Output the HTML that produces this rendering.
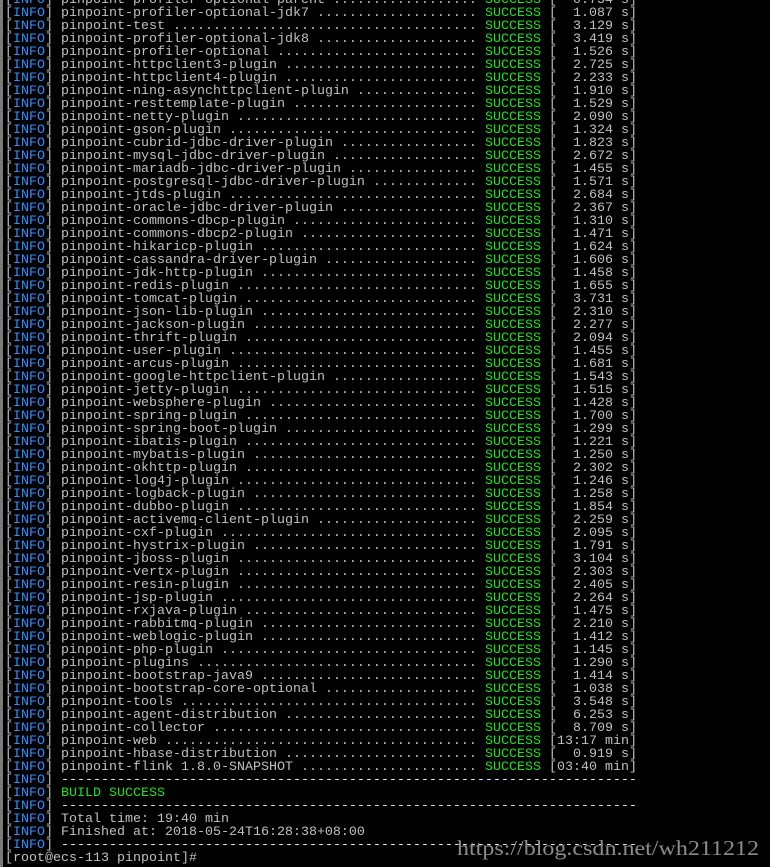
<!DOCTYPE html>
<html><head><meta charset="utf-8">
<style>
html,body{margin:0;padding:0;background:#000;}
body{width:770px;height:867px;overflow:hidden;position:relative;}
.bar{position:absolute;left:0;top:0;width:3px;height:867px;background:#7a7a7a;}
.t{position:absolute;left:5px;top:-6px;font-family:"Liberation Mono",monospace;font-size:13.33px;line-height:13px;color:#c0c0c0;}
.l{position:relative;height:13px;white-space:pre;}
.i{color:#2f8fff}
.r::before{content:"....................................................";position:absolute;left:56px;top:0;width:416px;overflow:hidden;color:#c0c0c0;}
.n{position:relative;background:#000;padding-right:8px;}
.s{position:absolute;left:480px;top:0;}
.g{color:#19e619}
.d{color:#cfeff4}
.wm{position:absolute;left:455px;top:835px;}
</style></head><body>
<div class="bar"></div>
<div class="t">
<div class="l r">[<span class="i">INFO</span>] <span class="n">pinpoint-profiler-optional-parent</span><span class="s"><span class="g">SUCCESS</span> [  0.754 s]</span></div>
<div class="l r">[<span class="i">INFO</span>] <span class="n">pinpoint-profiler-optional-jdk7</span><span class="s"><span class="g">SUCCESS</span> [  1.087 s]</span></div>
<div class="l r">[<span class="i">INFO</span>] <span class="n">pinpoint-test</span><span class="s"><span class="g">SUCCESS</span> [  3.129 s]</span></div>
<div class="l r">[<span class="i">INFO</span>] <span class="n">pinpoint-profiler-optional-jdk8</span><span class="s"><span class="g">SUCCESS</span> [  3.419 s]</span></div>
<div class="l r">[<span class="i">INFO</span>] <span class="n">pinpoint-profiler-optional</span><span class="s"><span class="g">SUCCESS</span> [  1.526 s]</span></div>
<div class="l r">[<span class="i">INFO</span>] <span class="n">pinpoint-httpclient3-plugin</span><span class="s"><span class="g">SUCCESS</span> [  2.725 s]</span></div>
<div class="l r">[<span class="i">INFO</span>] <span class="n">pinpoint-httpclient4-plugin</span><span class="s"><span class="g">SUCCESS</span> [  2.233 s]</span></div>
<div class="l r">[<span class="i">INFO</span>] <span class="n">pinpoint-ning-asynchttpclient-plugin</span><span class="s"><span class="g">SUCCESS</span> [  1.910 s]</span></div>
<div class="l r">[<span class="i">INFO</span>] <span class="n">pinpoint-resttemplate-plugin</span><span class="s"><span class="g">SUCCESS</span> [  1.529 s]</span></div>
<div class="l r">[<span class="i">INFO</span>] <span class="n">pinpoint-netty-plugin</span><span class="s"><span class="g">SUCCESS</span> [  2.090 s]</span></div>
<div class="l r">[<span class="i">INFO</span>] <span class="n">pinpoint-gson-plugin</span><span class="s"><span class="g">SUCCESS</span> [  1.324 s]</span></div>
<div class="l r">[<span class="i">INFO</span>] <span class="n">pinpoint-cubrid-jdbc-driver-plugin</span><span class="s"><span class="g">SUCCESS</span> [  1.823 s]</span></div>
<div class="l r">[<span class="i">INFO</span>] <span class="n">pinpoint-mysql-jdbc-driver-plugin</span><span class="s"><span class="g">SUCCESS</span> [  2.672 s]</span></div>
<div class="l r">[<span class="i">INFO</span>] <span class="n">pinpoint-mariadb-jdbc-driver-plugin</span><span class="s"><span class="g">SUCCESS</span> [  1.455 s]</span></div>
<div class="l r">[<span class="i">INFO</span>] <span class="n">pinpoint-postgresql-jdbc-driver-plugin</span><span class="s"><span class="g">SUCCESS</span> [  1.571 s]</span></div>
<div class="l r">[<span class="i">INFO</span>] <span class="n">pinpoint-jtds-plugin</span><span class="s"><span class="g">SUCCESS</span> [  2.684 s]</span></div>
<div class="l r">[<span class="i">INFO</span>] <span class="n">pinpoint-oracle-jdbc-driver-plugin</span><span class="s"><span class="g">SUCCESS</span> [  2.367 s]</span></div>
<div class="l r">[<span class="i">INFO</span>] <span class="n">pinpoint-commons-dbcp-plugin</span><span class="s"><span class="g">SUCCESS</span> [  1.310 s]</span></div>
<div class="l r">[<span class="i">INFO</span>] <span class="n">pinpoint-commons-dbcp2-plugin</span><span class="s"><span class="g">SUCCESS</span> [  1.471 s]</span></div>
<div class="l r">[<span class="i">INFO</span>] <span class="n">pinpoint-hikaricp-plugin</span><span class="s"><span class="g">SUCCESS</span> [  1.624 s]</span></div>
<div class="l r">[<span class="i">INFO</span>] <span class="n">pinpoint-cassandra-driver-plugin</span><span class="s"><span class="g">SUCCESS</span> [  1.606 s]</span></div>
<div class="l r">[<span class="i">INFO</span>] <span class="n">pinpoint-jdk-http-plugin</span><span class="s"><span class="g">SUCCESS</span> [  1.458 s]</span></div>
<div class="l r">[<span class="i">INFO</span>] <span class="n">pinpoint-redis-plugin</span><span class="s"><span class="g">SUCCESS</span> [  1.655 s]</span></div>
<div class="l r">[<span class="i">INFO</span>] <span class="n">pinpoint-tomcat-plugin</span><span class="s"><span class="g">SUCCESS</span> [  3.731 s]</span></div>
<div class="l r">[<span class="i">INFO</span>] <span class="n">pinpoint-json-lib-plugin</span><span class="s"><span class="g">SUCCESS</span> [  2.310 s]</span></div>
<div class="l r">[<span class="i">INFO</span>] <span class="n">pinpoint-jackson-plugin</span><span class="s"><span class="g">SUCCESS</span> [  2.277 s]</span></div>
<div class="l r">[<span class="i">INFO</span>] <span class="n">pinpoint-thrift-plugin</span><span class="s"><span class="g">SUCCESS</span> [  2.094 s]</span></div>
<div class="l r">[<span class="i">INFO</span>] <span class="n">pinpoint-user-plugin</span><span class="s"><span class="g">SUCCESS</span> [  1.455 s]</span></div>
<div class="l r">[<span class="i">INFO</span>] <span class="n">pinpoint-arcus-plugin</span><span class="s"><span class="g">SUCCESS</span> [  1.681 s]</span></div>
<div class="l r">[<span class="i">INFO</span>] <span class="n">pinpoint-google-httpclient-plugin</span><span class="s"><span class="g">SUCCESS</span> [  1.543 s]</span></div>
<div class="l r">[<span class="i">INFO</span>] <span class="n">pinpoint-jetty-plugin</span><span class="s"><span class="g">SUCCESS</span> [  1.515 s]</span></div>
<div class="l r">[<span class="i">INFO</span>] <span class="n">pinpoint-websphere-plugin</span><span class="s"><span class="g">SUCCESS</span> [  1.428 s]</span></div>
<div class="l r">[<span class="i">INFO</span>] <span class="n">pinpoint-spring-plugin</span><span class="s"><span class="g">SUCCESS</span> [  1.700 s]</span></div>
<div class="l r">[<span class="i">INFO</span>] <span class="n">pinpoint-spring-boot-plugin</span><span class="s"><span class="g">SUCCESS</span> [  1.299 s]</span></div>
<div class="l r">[<span class="i">INFO</span>] <span class="n">pinpoint-ibatis-plugin</span><span class="s"><span class="g">SUCCESS</span> [  1.221 s]</span></div>
<div class="l r">[<span class="i">INFO</span>] <span class="n">pinpoint-mybatis-plugin</span><span class="s"><span class="g">SUCCESS</span> [  1.250 s]</span></div>
<div class="l r">[<span class="i">INFO</span>] <span class="n">pinpoint-okhttp-plugin</span><span class="s"><span class="g">SUCCESS</span> [  2.302 s]</span></div>
<div class="l r">[<span class="i">INFO</span>] <span class="n">pinpoint-log4j-plugin</span><span class="s"><span class="g">SUCCESS</span> [  1.246 s]</span></div>
<div class="l r">[<span class="i">INFO</span>] <span class="n">pinpoint-logback-plugin</span><span class="s"><span class="g">SUCCESS</span> [  1.258 s]</span></div>
<div class="l r">[<span class="i">INFO</span>] <span class="n">pinpoint-dubbo-plugin</span><span class="s"><span class="g">SUCCESS</span> [  1.854 s]</span></div>
<div class="l r">[<span class="i">INFO</span>] <span class="n">pinpoint-activemq-client-plugin</span><span class="s"><span class="g">SUCCESS</span> [  2.259 s]</span></div>
<div class="l r">[<span class="i">INFO</span>] <span class="n">pinpoint-cxf-plugin</span><span class="s"><span class="g">SUCCESS</span> [  2.095 s]</span></div>
<div class="l r">[<span class="i">INFO</span>] <span class="n">pinpoint-hystrix-plugin</span><span class="s"><span class="g">SUCCESS</span> [  1.791 s]</span></div>
<div class="l r">[<span class="i">INFO</span>] <span class="n">pinpoint-jboss-plugin</span><span class="s"><span class="g">SUCCESS</span> [  3.104 s]</span></div>
<div class="l r">[<span class="i">INFO</span>] <span class="n">pinpoint-vertx-plugin</span><span class="s"><span class="g">SUCCESS</span> [  2.303 s]</span></div>
<div class="l r">[<span class="i">INFO</span>] <span class="n">pinpoint-resin-plugin</span><span class="s"><span class="g">SUCCESS</span> [  2.405 s]</span></div>
<div class="l r">[<span class="i">INFO</span>] <span class="n">pinpoint-jsp-plugin</span><span class="s"><span class="g">SUCCESS</span> [  2.264 s]</span></div>
<div class="l r">[<span class="i">INFO</span>] <span class="n">pinpoint-rxjava-plugin</span><span class="s"><span class="g">SUCCESS</span> [  1.475 s]</span></div>
<div class="l r">[<span class="i">INFO</span>] <span class="n">pinpoint-rabbitmq-plugin</span><span class="s"><span class="g">SUCCESS</span> [  2.210 s]</span></div>
<div class="l r">[<span class="i">INFO</span>] <span class="n">pinpoint-weblogic-plugin</span><span class="s"><span class="g">SUCCESS</span> [  1.412 s]</span></div>
<div class="l r">[<span class="i">INFO</span>] <span class="n">pinpoint-php-plugin</span><span class="s"><span class="g">SUCCESS</span> [  1.145 s]</span></div>
<div class="l r">[<span class="i">INFO</span>] <span class="n">pinpoint-plugins</span><span class="s"><span class="g">SUCCESS</span> [  1.290 s]</span></div>
<div class="l r">[<span class="i">INFO</span>] <span class="n">pinpoint-bootstrap-java9</span><span class="s"><span class="g">SUCCESS</span> [  1.414 s]</span></div>
<div class="l r">[<span class="i">INFO</span>] <span class="n">pinpoint-bootstrap-core-optional</span><span class="s"><span class="g">SUCCESS</span> [  1.038 s]</span></div>
<div class="l r">[<span class="i">INFO</span>] <span class="n">pinpoint-tools</span><span class="s"><span class="g">SUCCESS</span> [  3.548 s]</span></div>
<div class="l r">[<span class="i">INFO</span>] <span class="n">pinpoint-agent-distribution</span><span class="s"><span class="g">SUCCESS</span> [  6.253 s]</span></div>
<div class="l r">[<span class="i">INFO</span>] <span class="n">pinpoint-collector</span><span class="s"><span class="g">SUCCESS</span> [  8.709 s]</span></div>
<div class="l r">[<span class="i">INFO</span>] <span class="n">pinpoint-web</span><span class="s"><span class="g">SUCCESS</span> [13:17 min]</span></div>
<div class="l r">[<span class="i">INFO</span>] <span class="n">pinpoint-hbase-distribution</span><span class="s"><span class="g">SUCCESS</span> [  0.919 s]</span></div>
<div class="l r">[<span class="i">INFO</span>] <span class="n">pinpoint-flink 1.8.0-SNAPSHOT</span><span class="s"><span class="g">SUCCESS</span> [03:40 min]</span></div>
<div class="l">[<span class="i">INFO</span>] <span class="d">------------------------------------------------------------------------</span></div>
<div class="l">[<span class="i">INFO</span>] <span class="g">BUILD SUCCESS</span></div>
<div class="l">[<span class="i">INFO</span>] <span class="d">------------------------------------------------------------------------</span></div>
<div class="l">[<span class="i">INFO</span>] Total time: 19:40 min</div>
<div class="l">[<span class="i">INFO</span>] Finished at: 2018-05-24T16:28:38+08:00</div>
<div class="l">[<span class="i">INFO</span>] <span class="d">------------------------------------------------------------------------</span></div>
<div class="l">[root@ecs-113 pinpoint]#</div>
</div>
<svg class="wm" width="310" height="30" viewBox="0 0 310 30"><text x="2" y="20" textLength="302" lengthAdjust="spacingAndGlyphs" font-family="Liberation Serif, serif" font-size="21" fill="#8c8c8c">https://blog.csdn.net/wh211212</text></svg>
</body></html>
